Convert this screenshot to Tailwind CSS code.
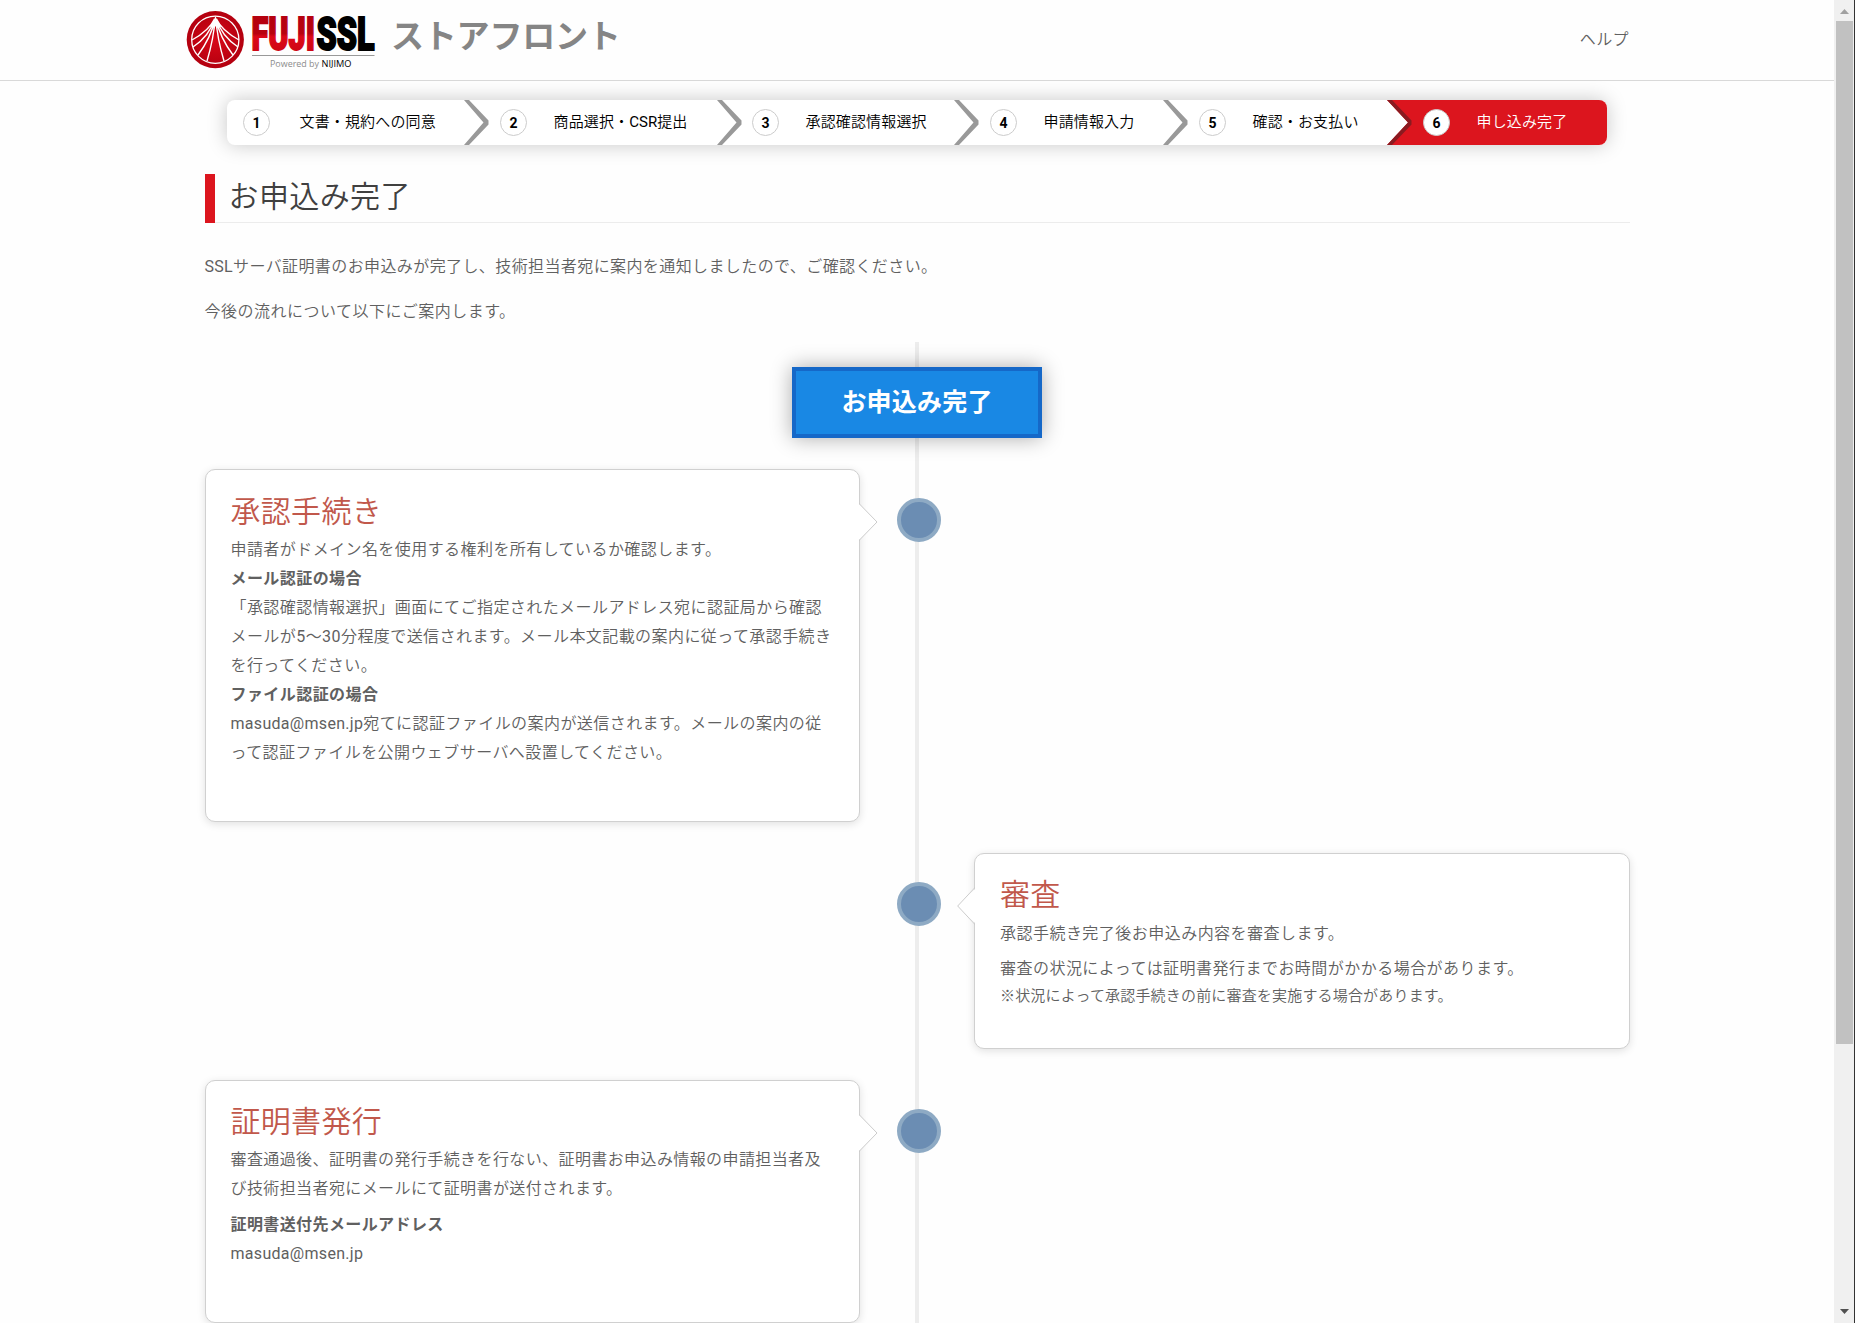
<!DOCTYPE html>
<html lang="ja">
<head>
<meta charset="utf-8">
<title>お申込み完了 | FujiSSL ストアフロント</title>
<script src="https://cdn.jsdelivr.net/npm/@tailwindcss/browser@4"></script>
</head>
<body class="flex h-[1323px] w-[1855px] overflow-hidden bg-[#fefefe] font-['Roboto','Noto_Sans_CJK_JP',sans-serif] text-base font-[350] text-[#606060]">

<div class="flex h-[1323px] w-[1834px] flex-col overflow-hidden">
  <header class="h-[81px] shrink-0 border-b border-[#d9d9d9]">
    <div class="mx-auto flex h-20 w-[1460px] items-center justify-between pr-[18px]">
      <div class="flex">
        <svg class="overflow-visible font-normal" width="190" height="80" viewBox="187 0 190 80">
          <defs>
            <linearGradient id="g" x1="0" y1="0" x2="0" y2="1"><stop offset="0" stop-color="#b3000f"/><stop offset=".5" stop-color="#b8020f"/><stop offset=".56" stop-color="#dd0818"/><stop offset="1" stop-color="#c40412"/></linearGradient>
            <radialGradient id="r"><stop offset="0" stop-color="#d80818"/><stop offset="1" stop-color="#b3000f"/></radialGradient>
          </defs>
          <circle cx="215.3" cy="39.7" r="28.6" fill="url(#r)"/>
          <circle cx="215.3" cy="39.7" r="23.6" fill="none" stroke="#fff" stroke-width="1.3"/>
          <g fill="none" stroke="#fff" stroke-width="1.4">
            <path d="M214.500 19C210 29 201 35 192 40M214.500 19C211 31 202 41 193 47M215 19C212 33 204 47 198 55M215 19C214 35 210 51 207 61M216 19C217 35 221 51 224 61M216 19C219 33 227 47 233 55M216.500 19C220 31 229 41 238 47M216.500 19C221 29 230 35 239 40"/>
          </g>
          <path d="M215.500 16C214.500 20 211 24 209.500 27L213 26L214 29L215.500 26L217 29L218 26L221.500 27C220 24 216.500 20 215.500 16Z" fill="#fff"/>
          <text x="251.500" y="50" font-family="Roboto" font-weight="900" font-size="47" textLength="63.500" lengthAdjust="spacingAndGlyphs" fill="url(#g)" stroke="url(#g)" stroke-width="2">FUJI</text>
          <text x="316.500" y="50" font-family="Roboto" font-weight="900" font-size="47" textLength="58" lengthAdjust="spacingAndGlyphs" fill="#000" stroke="#000" stroke-width="2">SSL</text>
          <path d="M252 55.500H374.500" stroke="#999" stroke-width="1"/>
          <text x="270" y="66.500" font-family="Open Sans" font-size="9" textLength="49" lengthAdjust="spacingAndGlyphs" fill="#8c8c8c">Powered by</text>
          <text x="321.500" y="66.500" font-family="Open Sans" font-size="9" textLength="30" lengthAdjust="spacingAndGlyphs" fill="#000">NIJIMO</text>
        </svg>
        <div class="mt-[12px] ml-[14px] h-[50px] text-[33px] leading-[50px] font-bold tracking-[-0.2px] text-[#858585]">ストアフロント</div>
      </div>
      <a class="text-[16px] leading-6 tracking-[0.4px]">ヘルプ</a>
    </div>
  </header>

  <main class="mx-auto flex w-[1425px] flex-col">
    <ol class="mt-[19px] ml-[22px] flex h-[45px] w-[1380px] rounded-lg bg-white text-[15px] leading-[44px] tracking-[0.15px] text-black shadow-[0_0_20px_rgba(0,0,0,0.22)]">
      <li class="flex w-[237px] items-center pl-4">
        <b class="flex size-[27px] items-center justify-center rounded-full border border-[#ccc] pl-px text-[14px] leading-none">1</b><span class="-mt-[2px] ml-[30px]">文書・規約への同意</span>
      </li>
      <li class="flex w-[253px] items-center">
        <svg class="w-[25px] shrink-0" height="45" viewBox="0 0 25 45"><path d="M0 0H5L24.500 20.500V24.500L5 45H0L19.500 22.500Z" fill="#999"/></svg>
        <b class="ml-[11px] flex size-[27px] items-center justify-center rounded-full border border-[#ccc] pl-px text-[14px] leading-none">2</b><span class="-mt-[2px] ml-[27px]">商品選択・<span class="font-normal tracking-normal">CSR</span>提出</span>
      </li>
      <li class="flex w-[237px] items-center">
        <svg class="w-[25px] shrink-0" height="45" viewBox="0 0 25 45"><path d="M0 0H5L24.500 20.500V24.500L5 45H0L19.500 22.500Z" fill="#999"/></svg>
        <b class="ml-[10px] flex size-[27px] items-center justify-center rounded-full border border-[#ccc] pl-px text-[14px] leading-none">3</b><span class="-mt-[2px] ml-[27px]">承認確認情報選択</span>
      </li>
      <li class="flex w-[209px] items-center">
        <svg class="w-[25px] shrink-0" height="45" viewBox="0 0 25 45"><path d="M0 0H5L24.500 20.500V24.500L5 45H0L19.500 22.500Z" fill="#999"/></svg>
        <b class="ml-[11px] flex size-[27px] items-center justify-center rounded-full border border-[#ccc] pl-px text-[14px] leading-none">4</b><span class="-mt-[2px] ml-[27px]">申請情報入力</span>
      </li>
      <li class="flex w-[224px] items-center">
        <svg class="w-[25px] shrink-0" height="45" viewBox="0 0 25 45"><path d="M0 0H5L24.500 20.500V24.500L5 45H0L19.500 22.500Z" fill="#999"/></svg>
        <b class="ml-[11px] flex size-[27px] items-center justify-center rounded-full border border-[#ccc] pl-px text-[14px] leading-none">5</b><span class="-mt-[2px] ml-[27px]">確認・お支払い</span>
      </li>
      <li class="flex w-[220px] items-center rounded-r-lg bg-[#dc151e] text-white">
        <svg class="w-[25px] shrink-0" height="45" viewBox="0 0 25 45"><path d="M0 0L21 22.500L0 45Z" fill="#fff"/><path d="M0 0H5L24.500 20.500V24.500L5 45H0L21 22.500Z" fill="#8a1a20"/></svg>
        <b class="ml-[11px] flex size-[27px] items-center justify-center rounded-full border border-[#ccc] bg-white pl-px text-[14px] leading-none text-black">6</b><span class="-mt-[2px] ml-[27px]">申し込み完了</span>
      </li>
    </ol>

    <div class="mt-[29px] flex h-[49px] border-b border-[#ececec]">
      <div class="-mb-px w-[10px] bg-[#dc151e]"></div>
      <h1 class="ml-[14px] text-[30px] leading-[46px] font-[350] tracking-[0.4px] text-[#404040]">お申込み完了</h1>
    </div>

    <div class="mt-[29px] space-y-[16px] text-[16px] leading-[29px] tracking-[0.4px]">
      <p><span class="font-normal tracking-[0.3px]">SSL</span>サーバ証明書のお申込みが完了し、技術担当者宛に案内を通知しましたので、ご確認ください。</p>
      <p class="tracking-[0.5px]">今後の流れについて以下にご案内します。</p>
    </div>

    <section class="relative mt-[16px] flex h-[1100px] flex-col pt-[25px]">
      <div class="absolute top-0 left-[710px] h-full w-1 bg-[#ededed]"></div>
      <div class="relative mx-auto h-[71px] w-[250px] border-4 border-[#1568c8] bg-[#1988e4] text-center text-[25px] leading-[63px] font-bold tracking-[0.2px] text-white shadow-[0_0_20px_rgba(0,0,0,0.33)]">お申込み完了</div>

      <div class="relative mt-[31px] flex h-[353px]">
        <article class="relative w-[655px] rounded-[10px] border border-[#d0d0d0] bg-white pt-[20px] pl-[25px] leading-[29px] tracking-[0.43px] shadow-[0_2px_8px_rgba(0,0,0,0.12)]">
          <h2 class="h-[45px] text-[30px] leading-[43px] font-[350] tracking-[0.3px] text-[#c1584b]">承認手続き</h2>
          <p>申請者がドメイン名を使用する権利を所有しているか確認します。</p>
          <p class="font-bold">メール認証の場合</p>
          <p>「承認確認情報選択」画面にてご指定されたメールアドレス宛に認証局から確認<br>メールが<span class="font-normal">5</span>～<span class="font-normal">30</span>分程度で送信されます。メール本文記載の案内に従って承認手続き<br>を行ってください。</p>
          <p class="font-bold">ファイル認証の場合</p>
          <p><span class="font-normal tracking-[0.3px]">masuda@msen.jp</span>宛てに認証ファイルの案内が送信されます。メールの案内の従<br>って認証ファイルを公開ウェブサーバへ設置してください。</p>
          <svg class="absolute top-[33px] -right-[19px]" width="20" height="38" viewBox="0 0 20 38"><path d="M0 1L1 1L19 19L1 37H0Z" fill="#fff"/><path d="M1.500 0V1L19 19L1.500 37V38" fill="none" stroke="#ccc"/></svg>
        </article>
        <i class="mt-[29px] ml-[37px] size-11 rounded-full border-4 border-[#8eaac4] bg-[#6b8db3]"></i>
      </div>

      <div class="relative mt-[31px] flex h-[196px]">
        <i class="mt-[29px] ml-[692px] size-11 rounded-full border-4 border-[#8eaac4] bg-[#6b8db3]"></i>
        <article class="relative ml-[33px] w-[656px] rounded-[10px] border border-[#d0d0d0] bg-white pt-[20px] pl-[25.5px] leading-[29px] tracking-[0.47px] shadow-[0_2px_8px_rgba(0,0,0,0.12)]">
          <h2 class="h-[45px] text-[30px] leading-[41px] font-[350] tracking-[0.3px] text-[#c1584b]">審査</h2>
          <p>承認手続き完了後お申込み内容を審査します。</p>
          <p class="mt-[6px]">審査の状況によっては証明書発行までお時間がかかる場合があります。</p>
          <p class="-mt-px text-[15px] tracking-[0.18px]">※状況によって承認手続きの前に審査を実施する場合があります。</p>
          <svg class="absolute top-[33px] -left-[18px]" width="20" height="38" viewBox="0 0 20 38"><path d="M19 1L1 19L19 37Z" fill="#fff"/><path d="M17.500 0V1L.7 19L17.500 37V38" fill="none" stroke="#ccc"/></svg>
        </article>
      </div>

      <div class="relative mt-[31px] flex h-[243px]">
        <article class="relative w-[655px] rounded-[10px] border border-[#d0d0d0] bg-white pt-[20px] pl-[25px] leading-[29px] tracking-[0.4px] shadow-[0_2px_8px_rgba(0,0,0,0.12)]">
          <h2 class="h-[44px] text-[30px] leading-[42px] font-[350] tracking-[0.3px] text-[#c1584b]">証明書発行</h2>
          <p>審査通過後、証明書の発行手続きを行ない、証明書お申込み情報の申請担当者及<br>び技術担当者宛にメールにて証明書が送付されます。</p>
          <p class="mt-[7px] font-bold">証明書送付先メールアドレス</p>
          <p class="font-normal tracking-[0.3px]">masuda@msen.jp</p>
          <svg class="absolute top-[33px] -right-[19px]" width="20" height="38" viewBox="0 0 20 38"><path d="M0 1L1 1L19 19L1 37H0Z" fill="#fff"/><path d="M1.500 0V1L19 19L1.500 37V38" fill="none" stroke="#ccc"/></svg>
        </article>
        <i class="mt-[28.5px] ml-[37px] size-11 rounded-full border-4 border-[#8eaac4] bg-[#6b8db3]"></i>
      </div>
    </section>
  </main>
</div>

<div class="flex h-[1323px] w-[21px] border-r border-[#333] bg-[#f0f0f0] pl-[2px]">
  <div class="flex w-[17px] flex-col items-center">
    <svg class="h-[21px] shrink-0" width="17" viewBox="0 0 17 21"><path d="M4 14L8.500 9L13 14Z" fill="#a0a0a0"/></svg>
    <div class="h-[1023px] w-[17px] bg-[#c1c1c1]"></div>
    <svg class="mt-auto h-[21px] shrink-0" width="17" viewBox="0 0 17 21"><path d="M4 7L8.500 12L13 7Z" fill="#505050"/></svg>
  </div>
</div>
</body>
</html>
